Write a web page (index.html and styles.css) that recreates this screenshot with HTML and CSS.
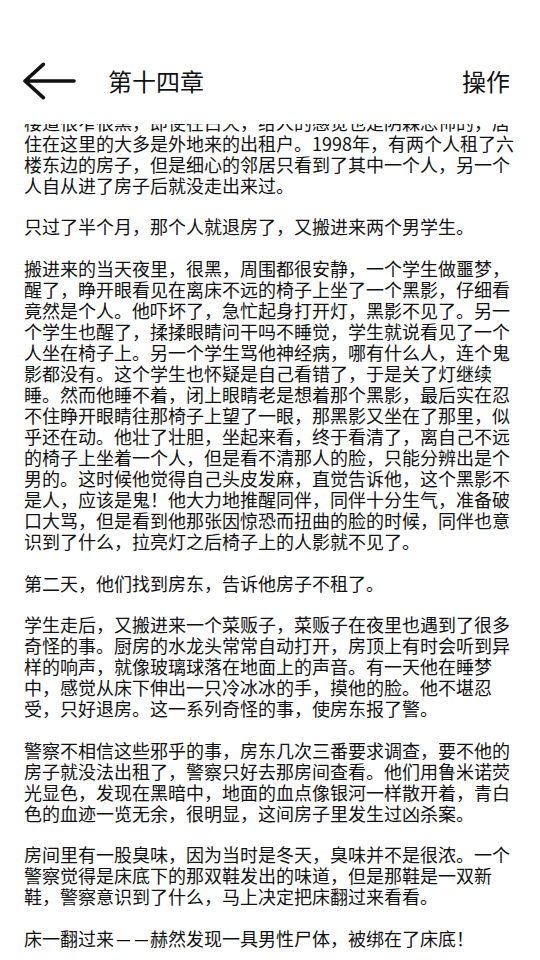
FILE: index.html
```html
<!DOCTYPE html>
<html lang="zh-CN">
<head>
<meta charset="utf-8">
<title>第十四章</title>
<link rel="stylesheet" href="styles.css">
</head>
<body>
<div class="app">
  <header class="topbar">
    <svg class="back" width="54" height="40" viewBox="0 0 54 40" aria-hidden="true">
      <path d="M20.3 3.3 L2 20 L20.3 36.7 M2 20 L51 20" fill="none" stroke="#111" stroke-width="3.6" stroke-linecap="round" stroke-linejoin="round"/>
    </svg>
    <div class="title">第十四章</div>
    <div class="action">操作</div>
  </header>
  <main class="reader">
    <div class="content">
      <p>楼道很窄很黑，即使在白天，给人的感觉也是阴森恐怖的，居住在这里的大多是外地来的出租户。1998年，有两个人租了六楼东边的房子，但是细心的邻居只看到了其中一个人，另一个人自从进了房子后就没走出来过。</p>
      <p>只过了半个月，那个人就退房了，又搬进来两个男学生。</p>
      <p>搬进来的当天夜里，很黑，周围都很安静，一个学生做噩梦，醒了，睁开眼看见在离床不远的椅子上坐了一个黑影，仔细看竟然是个人。他吓坏了，急忙起身打开灯，黑影不见了。另一个学生也醒了，揉揉眼睛问干吗不睡觉，学生就说看见了一个人坐在椅子上。另一个学生骂他神经病，哪有什么人，连个鬼影都没有。这个学生也怀疑是自己看错了，于是关了灯继续睡。然而他睡不着，闭上眼睛老是想着那个黑影，最后实在忍不住睁开眼睛往那椅子上望了一眼，那黑影又坐在了那里，似乎还在动。他壮了壮胆，坐起来看，终于看清了，离自己不远的椅子上坐着一个人，但是看不清那人的脸，只能分辨出是个男的。这时候他觉得自己头皮发麻，直觉告诉他，这个黑影不是人，应该是鬼！他大力地推醒同伴，同伴十分生气，准备破口大骂，但是看到他那张因惊恐而扭曲的脸的时候，同伴也意识到了什么，拉亮灯之后椅子上的人影就不见了。</p>
      <p>第二天，他们找到房东，告诉他房子不租了。</p>
      <p>学生走后，又搬进来一个菜贩子，菜贩子在夜里也遇到了很多奇怪的事。厨房的水龙头常常自动打开，房顶上有时会听到异样的响声，就像玻璃球落在地面上的声音。有一天他在睡梦中，感觉从床下伸出一只冷冰冰的手，摸他的脸。他不堪忍受，只好退房。这一系列奇怪的事，使房东报了警。</p>
      <p>警察不相信这些邪乎的事，房东几次三番要求调查，要不他的房子就没法出租了，警察只好去那房间查看。他们用鲁米诺荧光显色，发现在黑暗中，地面的血点像银河一样散开着，青白色的血迹一览无余，很明显，这间房子里发生过凶杀案。</p>
      <p>房间里有一股臭味，因为当时是冬天，臭味并不是很浓。一个警察觉得是床底下的那双鞋发出的味道，但是那鞋是一双新鞋，警察意识到了什么，马上决定把床翻过来看看。</p>
      <p>床一翻过来<span class="dash">—</span><span class="dash">—</span>赫然发现一具男性尸体，被绑在了床底！</p>
    </div>
  </main>
</div>
</body>
</html>
```

FILE: styles.css
```css
html, body {
  margin: 0;
  padding: 0;
  background: #ffffff;
}

body {
  width: 540px;
  height: 960px;
  overflow: hidden;
  font-family: "Noto Sans CJK SC", sans-serif;
  color: #111111;
}

.app {
  display: flex;
  flex-direction: column;
  height: 960px;
}

.topbar {
  flex: 0 0 auto;
  height: 124px;
  box-sizing: border-box;
  padding: 58px 30px 0 23px;
  display: flex;
  align-items: flex-start;
  background: #ffffff;
}

.back {
  display: block;
  flex: 0 0 auto;
  margin-top: 3px;
}

.title {
  margin-left: 31px;
  font-size: 24px;
  line-height: 46px;
  color: #111111;
}

.action {
  margin-left: auto;
  font-size: 24px;
  line-height: 46px;
  color: #111111;
}

.reader {
  flex: 1 1 auto;
  overflow: hidden;
}

.content {
  margin-top: -12.2px;
  padding: 0 20px 0 24px;
  font-size: 18px;
  line-height: 21px;
}

.content p {
  margin: 0 0 20.6px 0;
}

.dash {
  display: inline-block;
  width: 14px;
  margin: 0 2px;
  overflow: hidden;
  white-space: nowrap;
  vertical-align: top;
  height: 21px;
}
```
